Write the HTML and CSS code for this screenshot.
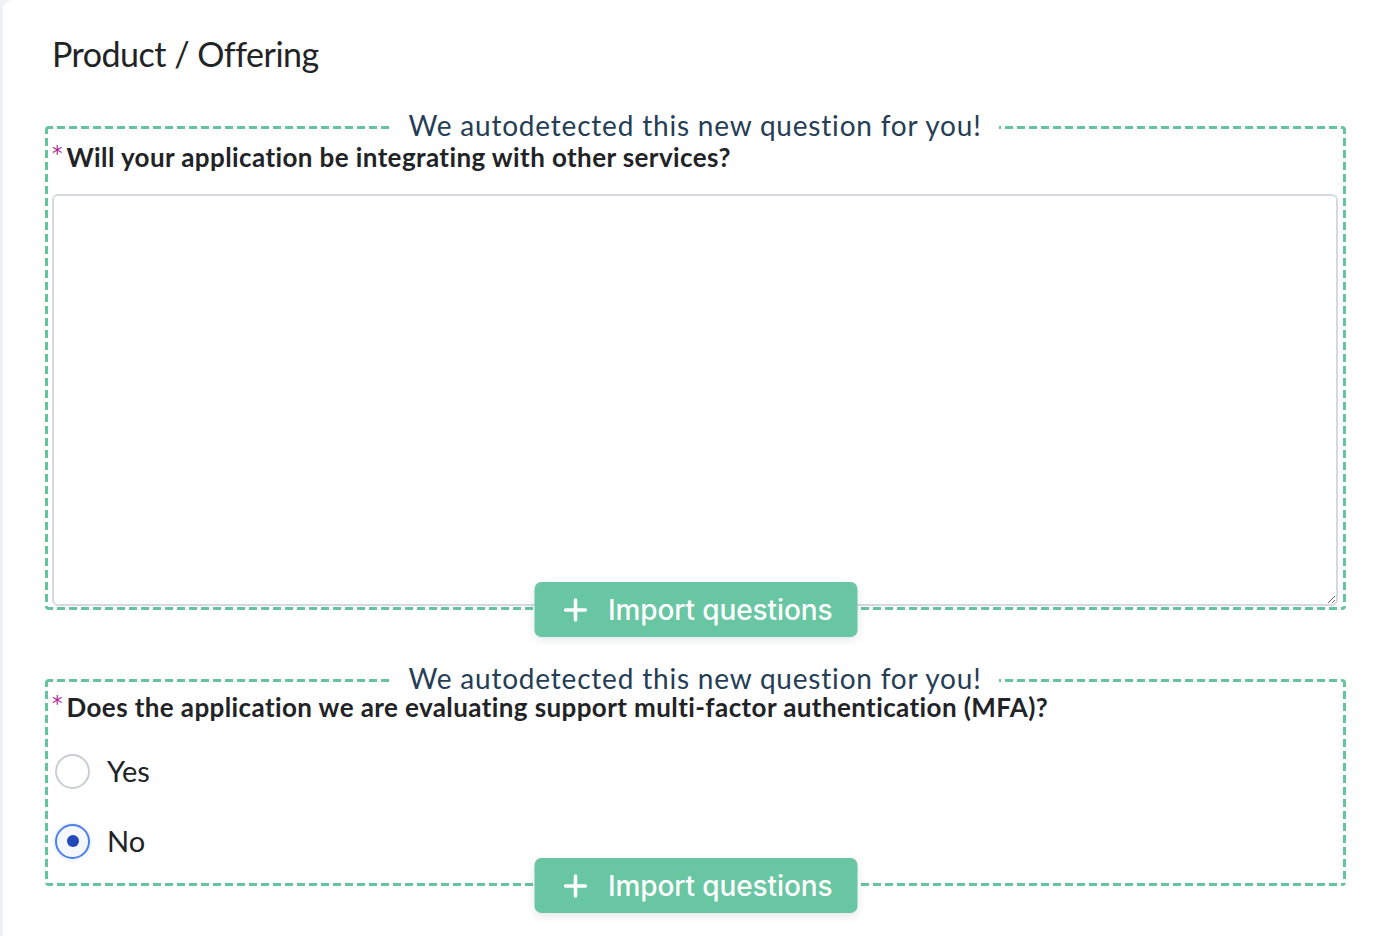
FILE: index.html
```html
<!DOCTYPE html>
<html lang="en">
<head>
<meta charset="utf-8">
<title>Product / Offering</title>
<link rel="stylesheet" href="styles.css">
</head>
<body>
<main class="card">
  <h1 class="title">Product / Offering</h1>

  <section class="suggest first">
    <div class="suggest-legend">We autodetected this new question for you!</div>
    <label class="q-label"><span class="req">*</span>Will your application be integrating with other services?</label>
    <textarea class="q-text"></textarea>
    <button class="import-btn" type="button">
      <svg class="plus" width="24" height="24" viewBox="0 0 24 24"><path d="M12 2v20M2 12h20" stroke="#fff" stroke-width="3.6" stroke-linecap="round"/></svg>
      <span>Import questions</span>
    </button>
  </section>

  <section class="suggest second">
    <div class="suggest-legend">We autodetected this new question for you!</div>
    <label class="q-label tight"><span class="req">*</span>Does the application we are evaluating support multi-factor authentication (MFA)?</label>
    <div class="radios">
      <label class="radio-row"><span class="radio"></span><span class="radio-text">Yes</span></label>
      <label class="radio-row"><span class="radio checked"><span class="dot"></span></span><span class="radio-text">No</span></label>
    </div>
    <button class="import-btn" type="button">
      <svg class="plus" width="24" height="24" viewBox="0 0 24 24"><path d="M12 2v20M2 12h20" stroke="#fff" stroke-width="3.6" stroke-linecap="round"/></svg>
      <span>Import questions</span>
    </button>
  </section>
</main>
</body>
</html>
```

FILE: styles.css
```css
html, body {
  margin: 0;
  padding: 0;
}
body {
  background: #eef2f6;
  padding-left: 3px;
  font-family: "Lato", "Noto Sans", sans-serif;
  color: #222326;
}
.card {
  background: #ffffff;
  border-top-left-radius: 9px;
  min-height: 936px;
  padding: 33px 38px 40px 42px;
  box-sizing: border-box;
}
.title {
  margin: 0 0 51px 0;
  padding-left: 7px;
  font-size: 34px;
  line-height: 42px;
  font-weight: 400;
  letter-spacing: -0.5px;
  color: #222326;
}
.suggest {
  position: relative;
  display: flow-root;
  padding: 0 8px 4px 7px;
}
.suggest::before {
  content: "";
  position: absolute;
  inset: 0;
  border-radius: 4px;
  pointer-events: none;
  background:
    repeating-linear-gradient(90deg, #63c49e 0 8px, transparent 8px 12px) left top / 100% 3px no-repeat,
    repeating-linear-gradient(90deg, #63c49e 0 8px, transparent 8px 12px) left bottom / 100% 3px no-repeat,
    repeating-linear-gradient(180deg, #63c49e 0 8px, transparent 8px 12px) left top / 3px 100% no-repeat,
    repeating-linear-gradient(180deg, #63c49e 0 8px, transparent 8px 12px) right top / 3px 100% no-repeat;
}
.suggest.second {
  margin-top: 69px;
  padding-bottom: 10px;
}
.suggest-legend {
  position: relative;
  z-index: 1;
  width: fit-content;
  margin: -15px auto 0;
  padding: 0 18px;
  background: #ffffff;
  font-size: 28px;
  line-height: 28px;
  letter-spacing: 0.8px;
  color: #253d55;
}
.q-label {
  display: block;
  position: relative;
  font-size: 26px;
  line-height: 30px;
  font-weight: 700;
  letter-spacing: 0.4px;
  color: #222326;
  margin: 3px 0 22px 0;
}
.q-label.tight {
  margin-top: 0;
  margin-bottom: 0;
}
.req {
  color: #b0248f;
  font-family: "DejaVu Sans", sans-serif;
  font-size: 21px;
  line-height: 0;
  font-weight: 400;
  vertical-align: 6px;
  margin: 0 4px 0 0;
  letter-spacing: 0;
}
.q-text {
  display: block;
  position: relative;
  width: 100%;
  box-sizing: border-box;
  height: 412px;
  margin: 0;
  border: 2px solid #d6d9df;
  border-radius: 6px;
  resize: vertical;
  font-family: inherit;
  background: #fff;
}
.import-btn {
  position: absolute;
  z-index: 2;
  left: 50%;
  bottom: -27px;
  transform: translateX(-50%);
  width: 323px;
  height: 55px;
  box-sizing: border-box;
  display: flex;
  align-items: center;
  gap: 21px;
  padding: 0 20px 0 29px;
  border: none;
  border-radius: 7px;
  background: #68c6a2;
  color: #ffffff;
  font-family: "Inter", "Liberation Sans", sans-serif;
  font-size: 28px;
  font-weight: 500;
  letter-spacing: -0.1px;
  box-shadow: 0 3px 8px rgba(40, 60, 80, 0.12);
  cursor: pointer;
}
.plus {
  flex: none;
}
.radios {
  display: flex;
  flex-direction: column;
  margin-top: 14px;
}
.radio-row {
  display: flex;
  align-items: center;
  height: 70px;
  padding-left: 3px;
  gap: 17px;
}
.radio {
  width: 35px;
  height: 35px;
  box-sizing: border-box;
  border: 2px solid #c9cdd3;
  border-radius: 50%;
  background: #fff;
  display: flex;
  align-items: center;
  justify-content: center;
}
.radio.checked {
  border-color: #4e80e8;
  background: #f4f7fe;
  box-shadow: 0 0 0 2px rgba(78, 128, 232, 0.08);
}
.dot {
  width: 12px;
  height: 12px;
  border-radius: 50%;
  background: #2149b9;
}
.radio-text {
  font-size: 29px;
  line-height: 34px;
  color: #222326;
}
```
